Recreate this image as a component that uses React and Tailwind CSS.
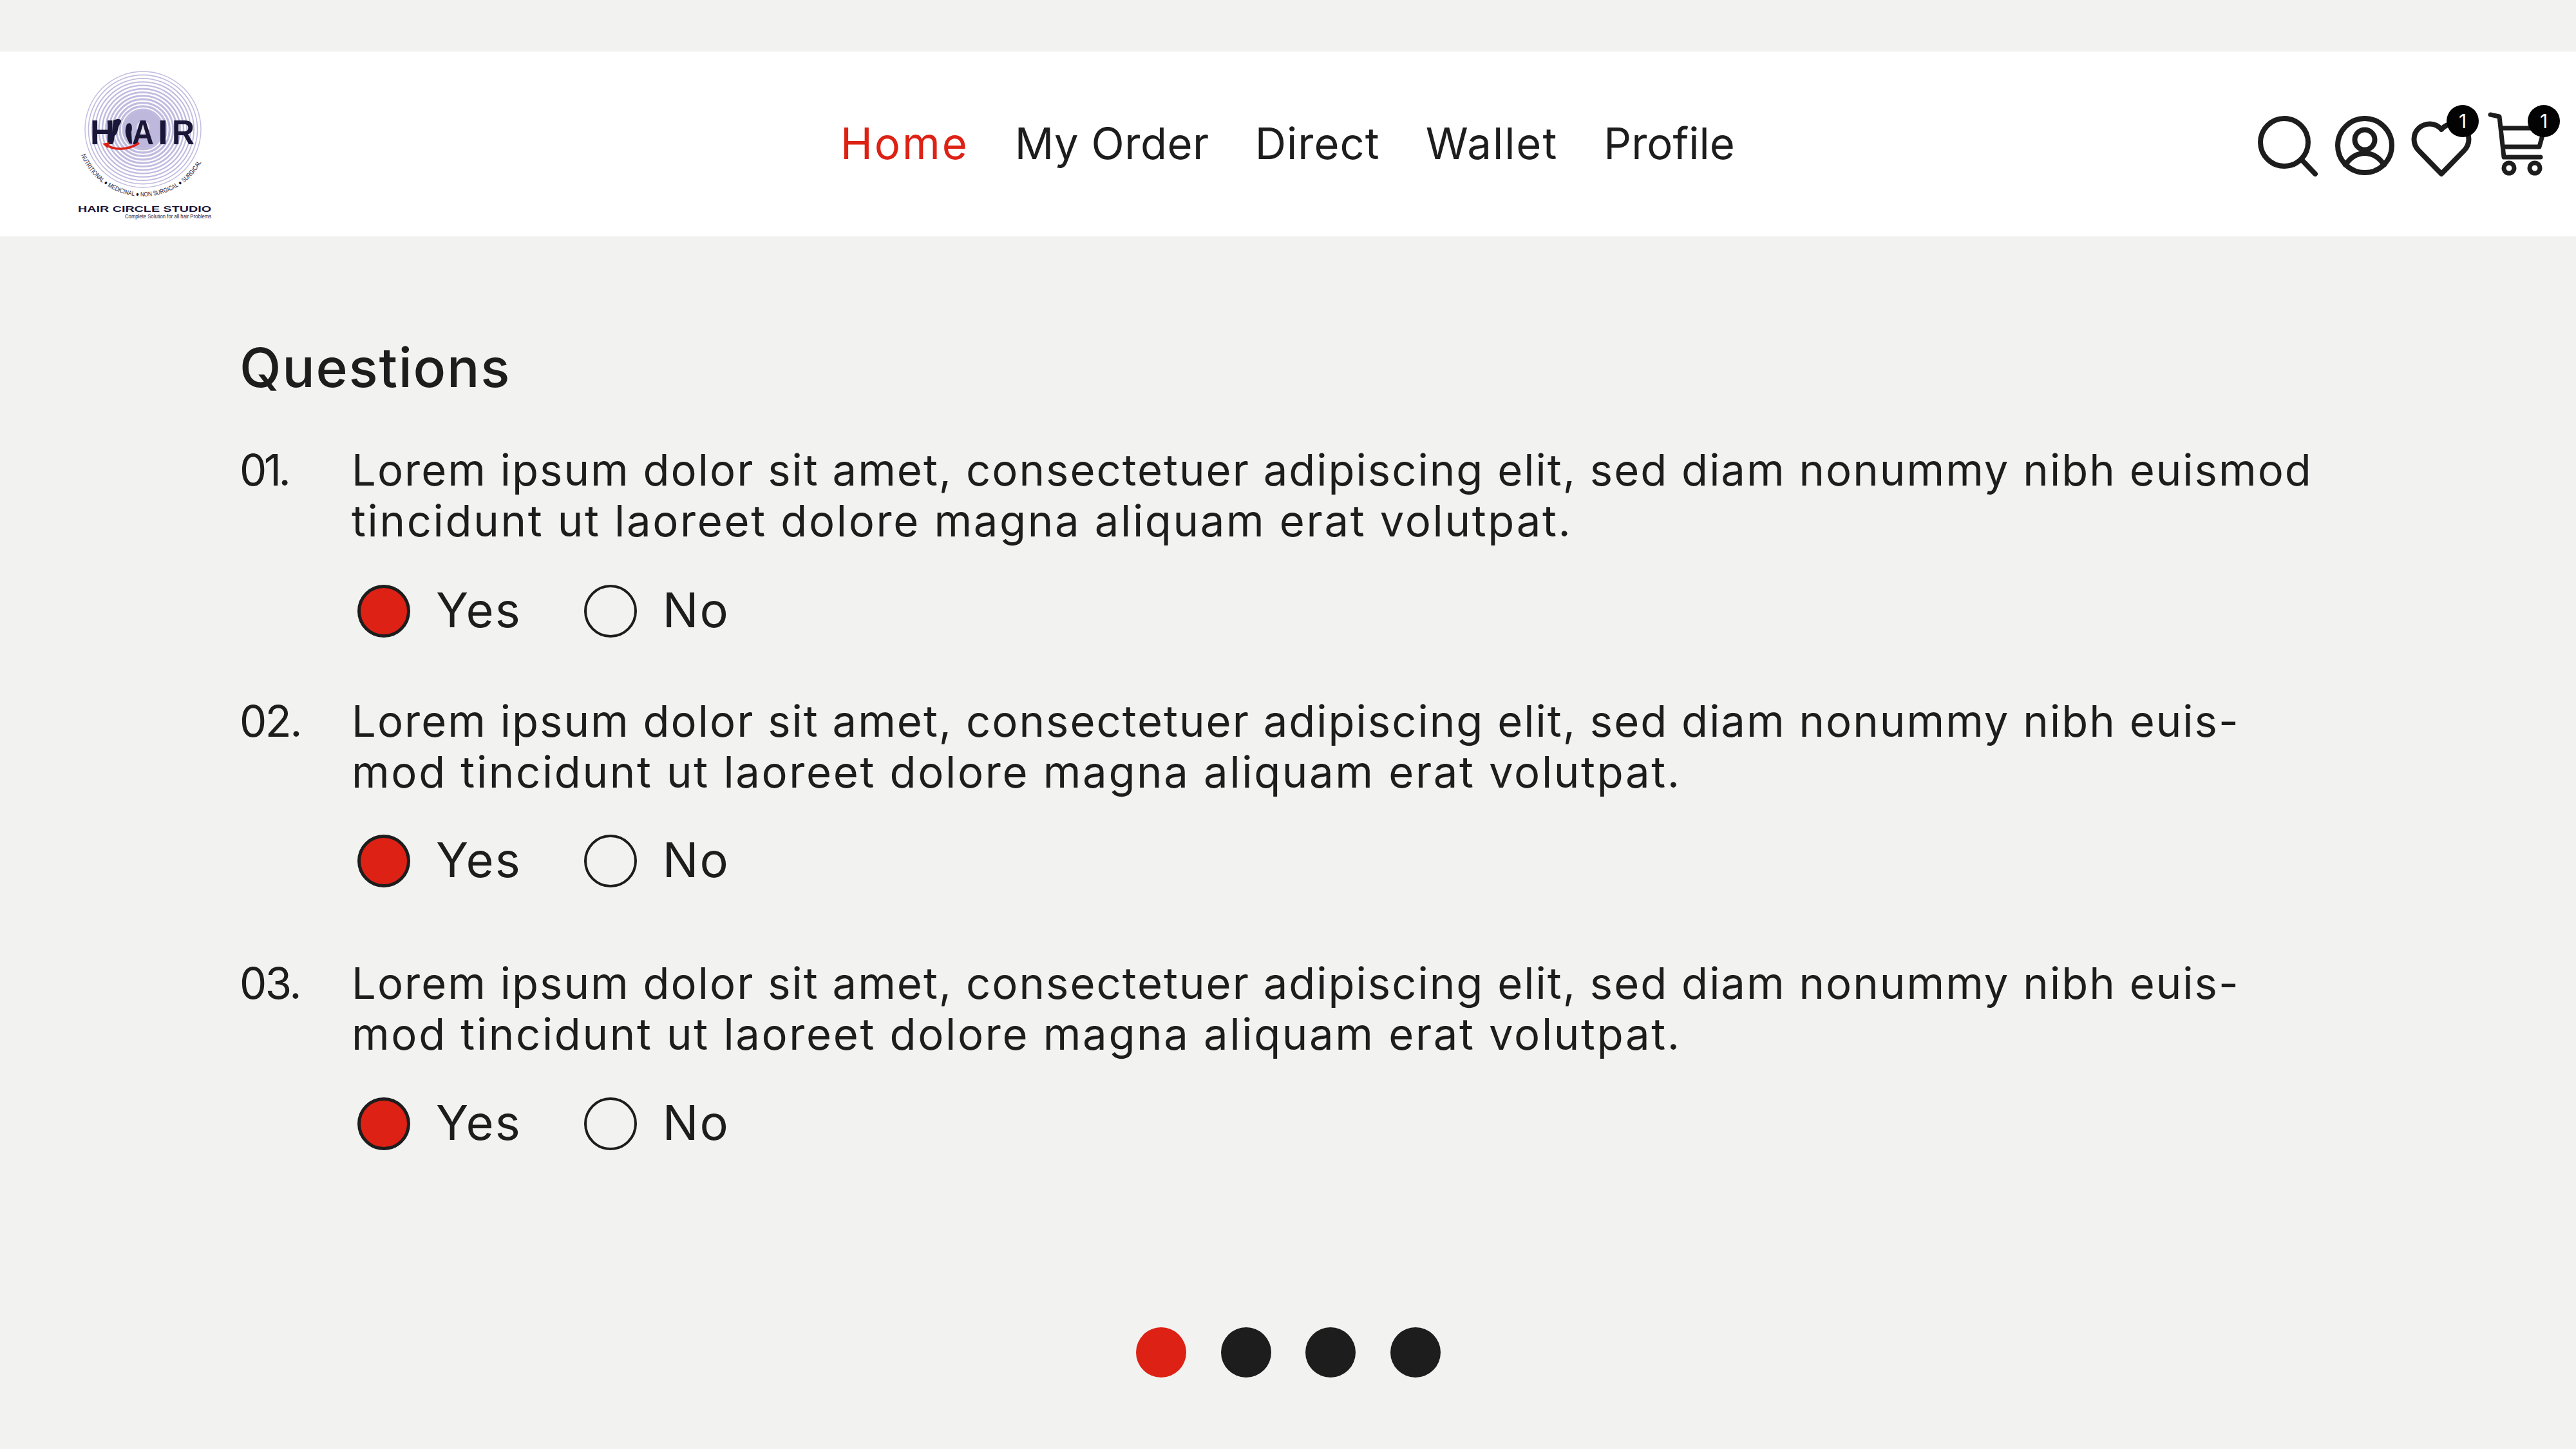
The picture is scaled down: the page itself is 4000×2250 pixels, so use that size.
import React from 'react';

const navItems = [
  { label: 'Home', track: 'tracking-[3px]' },
  { label: 'My Order', track: 'tracking-[0.5px]' },
  { label: 'Direct', track: 'tracking-[1px]' },
  { label: 'Wallet', track: 'tracking-[2px]' },
  { label: 'Profile', track: 'tracking-[0px]' },
];

const questions = [
  { num: '01.', numTrack: 'tracking-[-4.5px]', lines: ['Lorem ipsum dolor sit amet, consectetuer adipiscing elit, sed diam nonummy nibh euismod', 'tincidunt ut laoreet dolore magna aliquam erat volutpat.'], mt: 'mt-0', radioMt: 'mt-[60px]' },
  { num: '02.', numTrack: 'tracking-[-2.5px]', lines: ['Lorem ipsum dolor sit amet, consectetuer adipiscing elit, sed diam nonummy nibh euis-', 'mod tincidunt ut laoreet dolore magna aliquam erat volutpat.'], mt: 'mt-[90px]', radioMt: 'mt-[58px]' },
  { num: '03.', numTrack: 'tracking-[-2.5px]', lines: ['Lorem ipsum dolor sit amet, consectetuer adipiscing elit, sed diam nonummy nibh euis-', 'mod tincidunt ut laoreet dolore magna aliquam erat volutpat.'], mt: 'mt-[109px]', radioMt: 'mt-[59px]' },
];

const rings = Array.from({ length: 12 }, (_, i) => ({ r: 90 - i * 5.4, w: 1.4 + i * 0.22 }));

const Logo = () => (
  <svg viewBox="100 98 250 250" className="w-[250px] h-[250px] shrink-0">
    <circle cx="222" cy="200" r="30" fill="#bdb8dc" />
    {rings.map((ring) => (
      <circle key={ring.r} cx="222" cy="200" r={ring.r} fill="none" stroke="#c0bbdf" strokeWidth={ring.w} />
    ))}
    <circle cx="222" cy="197" r="10" fill="#e4e2ea" />
    <g fill="#1a1638" fontFamily="'Liberation Sans', sans-serif" fontWeight="700" fontSize="54">
      <text x="140" y="223" textLength="38" lengthAdjust="spacingAndGlyphs">H</text>
      <text x="205" y="223" textLength="34" lengthAdjust="spacingAndGlyphs">A</text>
      <text x="245" y="223" textLength="16" lengthAdjust="spacingAndGlyphs">I</text>
      <text x="267" y="223" textLength="35" lengthAdjust="spacingAndGlyphs">R</text>
    </g>
    <path d="M176 186 C184 182 192 184 186 192 C182 198 184 206 178 210 L176 222 L172 222 Z M197 192 C205 186 206 198 204 204 L205 222 L201 222 C196 212 192 204 197 192 Z" fill="#1a1638" />
    <path d="M216 221 C200 232 178 233 165 224" fill="none" stroke="#dd2115" strokeWidth="3.5" />
    <path d="M159 222 L170 220 L167 229 Z" fill="#dd2115" />
    <path id="logoArc" d="M126 240 A104 104 0 0 0 318 240" fill="none" />
    <text fill="#1a1638" fontFamily="'Liberation Sans', sans-serif" fontSize="10">
      <textPath href="#logoArc" textLength="232" lengthAdjust="spacingAndGlyphs">NUTRITIONAL ● MEDICINAL ● NON SURGICAL ● SURGICAL</textPath>
    </text>
    <text x="121" y="328" textLength="207" lengthAdjust="spacingAndGlyphs" fill="#1a1638" fontFamily="'Liberation Sans', sans-serif" fontWeight="700" fontSize="13">HAIR CIRCLE STUDIO</text>
    <text x="194" y="338" textLength="134" lengthAdjust="spacingAndGlyphs" fill="#1a1638" fontFamily="'Liberation Sans', sans-serif" fontSize="9">Complete Solution for all hair Problems</text>
  </svg>
);

const SearchIcon = () => (
  <svg viewBox="3500 175 100 105" className="w-[100px] h-[105px]" fill="none" stroke="#1d1d1d" strokeWidth="8" strokeLinecap="round">
    <circle cx="3547" cy="223" r="37" />
    <path d="M3574 250 L3595 272" />
  </svg>
);

const UserIcon = () => (
  <svg viewBox="3622 175 100 105" className="w-[100px] h-[105px]" fill="none" stroke="#1d1d1d" strokeWidth="8" strokeLinecap="round">
    <circle cx="3672" cy="228" r="42" />
    <circle cx="3672" cy="219" r="15.5" />
    <path d="M3642 258 C3650 246 3660 240 3672 240 C3684 240 3694 246 3702 258" />
  </svg>
);

const Badge = ({ className }) => (
  <span className={`absolute w-[50px] h-[50px] rounded-full bg-[#030304] text-white flex items-center justify-center text-[30px] ${className}`}>1</span>
);

const HeartIcon = () => (
  <div className="relative w-[110px] h-[105px] -ml-[4px]">
    <svg viewBox="3740 175 110 105" className="w-[110px] h-[105px]" fill="none" stroke="#1d1d1d" strokeWidth="8" strokeLinecap="round" strokeLinejoin="round">
      <path d="M3791 272 L3756 236 C3746 226 3746 210 3756 201 C3766 192 3782 192 3791 203 C3800 192 3816 192 3826 201 C3836 210 3836 226 3826 236 Z" />
    </svg>
    <Badge className="left-[59px] top-[-10px]" />
  </div>
);

const CartIcon = () => (
  <div className="relative w-[120px] h-[105px] -ml-[12px]">
    <svg viewBox="3860 175 120 105" className="w-[120px] h-[105px]" fill="none" stroke="#1d1d1d" strokeWidth="7" strokeLinecap="round" strokeLinejoin="round">
      <path d="M3867 180 L3881 183 L3888 246 L3945 246" />
      <path d="M3884 201 L3950 201" />
      <path d="M3887 230 L3943 230 L3952 198" />
      <circle cx="3896" cy="263" r="8" />
      <circle cx="3936" cy="263" r="8" />
    </svg>
    <Badge className="left-[65px] top-[-10px]" />
  </div>
);

const Radio = ({ checked, label }) => (
  <div className="flex items-center">
    <span className={`w-[82px] h-[82px] rounded-full border-[#1d1d1d] ${checked ? 'border-[5px] bg-[#dd2115]' : 'border-[4px]'}`} />
    <span className="ml-[40px] pb-[4px] text-[74px] leading-[78px] tracking-[2px] text-[#1d1d1d]">{label}</span>
  </div>
);

const App = () => {
  return (
    <div className="w-[4000px] h-[2250px] bg-[#f2f2f0] font-[Inter,sans-serif] text-[#1d1d1d] pt-[80px] overflow-hidden">
      <header className="h-[287px] bg-white flex items-center pl-[100px]">
        <Logo />
        <nav className="flex items-center gap-[71px] ml-[955px] text-[67px]">
          {navItems.map((item, i) => (
            <a key={item.label} className={`${item.track} ${i === 0 ? 'text-[#dd2115]' : ''}`}>{item.label}</a>
          ))}
        </nav>
        <div className="flex items-center ml-auto mr-[20px] mt-[4px] gap-[22px]">
          <SearchIcon />
          <UserIcon />
          <HeartIcon />
          <CartIcon />
        </div>
      </header>

      <main className="pl-[372px] pt-[154px]">
        <h1 className="text-[84px] leading-[100px] font-medium tracking-[1.7px] mb-[69px]">Questions</h1>
        {questions.map((q) => (
          <section key={q.num} className={q.mt}>
            <div className="flex text-[67px] leading-[79px]">
              <span className={`w-[174px] shrink-0 ${q.numTrack}`}>{q.num}</span>
              <p className="whitespace-nowrap">
                <span className="block tracking-[2px]">{q.lines[0]}</span>
                <span className="block tracking-[2.65px]">{q.lines[1]}</span>
              </p>
            </div>
            <div className={`flex items-center gap-[97px] ml-[183px] ${q.radioMt}`}>
              <Radio checked label="Yes" />
              <Radio label="No" />
            </div>
          </section>
        ))}
        <div className="flex gap-[53.5px] mt-[275px] ml-[1392px]">
          <span className="w-[78px] h-[78px] rounded-full bg-[#dd2115]" />
          <span className="w-[78px] h-[78px] rounded-full bg-[#1d1d1d]" />
          <span className="w-[78px] h-[78px] rounded-full bg-[#1d1d1d]" />
          <span className="w-[78px] h-[78px] rounded-full bg-[#1d1d1d]" />
        </div>
      </main>
    </div>
  );
};

export default App;
